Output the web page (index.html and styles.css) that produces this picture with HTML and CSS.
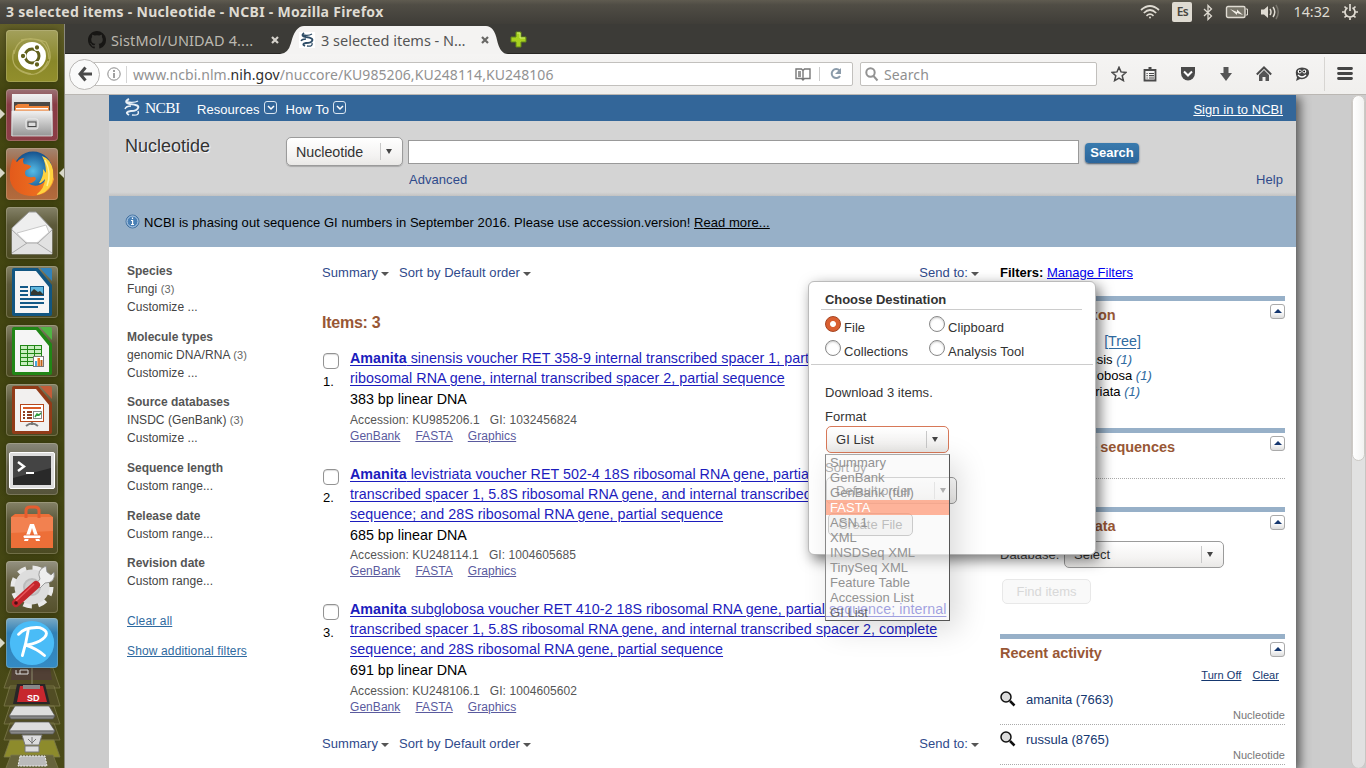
FILE: index.html
```html
<!DOCTYPE html>
<html lang="en">
<head>
<meta charset="utf-8">
<title>3 selected items - Nucleotide - NCBI</title>
<link rel="stylesheet" href="styles.css">
</head>
<body>
<div class="desktop">
  <header class="panel">
    <span class="panel-title">3 selected items - Nucleotide - NCBI - Mozilla Firefox</span>
    <div class="tray">
      <svg width="20" height="16" viewBox="0 0 20 16" fill="none" stroke="#dfdbd2" stroke-width="1.7"><path d="M1 6Q10-2 19 6M3.8 9Q10 3 16.2 9M6.5 11.8Q10 8.600 13.500 11.800"/><circle cx="10" cy="13.600" r="1" fill="#dfdbd2" stroke="none"/></svg>
      <span class="lang">Es</span>
      <svg class="bt" width="10" height="17" viewBox="0 0 10 17" fill="none" stroke="#dfdbd2" stroke-width="1.3"><path d="M1 5l7.500 7L5 15.500V1.500L8.500 5 1 12"/></svg>
      <svg class="battery" width="24" height="14" viewBox="0 0 24 14"><rect x="1.500" y="1.500" width="18.500" height="11" rx="1.500" fill="#777469" stroke="#dfdbd2" stroke-width="1.400"/><path d="M21 4h1.500v6H21" fill="none" stroke="#dfdbd2"/><path d="M5 4l7 3V4.500l6 5.500-6-2v2z" fill="#f0ede5"/></svg>
      <svg class="volume" width="20" height="18" viewBox="0 0 20 18" fill="none" stroke="#dfdbd2" stroke-width="1.500"><path d="M1 6.500h3L8 3v12l-4-3.500H1z" fill="#dfdbd2" stroke="none"/><path d="M10 6q2 3 0 6M13 4q3.500 5 0 10"/><path d="M16 2q4.500 7 0 14" stroke="#77746c"/></svg>
      <span class="clock">14:32</span>
      <svg width="16" height="16" viewBox="0 0 16 16" fill="none" stroke="#dfdbd2" stroke-width="2"><path d="M5.500 3.700a5 5 0 1 0 5 0M8 0v7M2.500 2.500l2 2M13.500 2.500l-2 2M0 8h3M16 8h-3M2.500 13.500l2-2M13.500 13.500l-2-2M8 16v-3" stroke-width="1.700"/></svg>
    </div>
  </header>

  <div class="workspace">
    <nav class="launcher">
      <div class="tile dash"><svg viewBox="0 0 52 52"><g fill="none" stroke="#bdb76a" stroke-width="1.300" opacity=".8"><path d="M8 24Q12 2 40 12M15 10Q42 4 43 29M40 12Q52 34 30 44M42 31Q32 52 13 40M25 44Q2 40 8 20"/></g><circle cx="26" cy="26" r="14" fill="#fff"/><circle cx="26" cy="26" r="7" fill="none" stroke="#61601c" stroke-width="3"/><g fill="#61601c" stroke="#fff" stroke-width="1.300"><circle cx="17" cy="26" r="2.800"/><circle cx="31" cy="17.500" r="2.800"/><circle cx="31" cy="34.500" r="2.800"/></g></svg></div>
      <div class="tile files"><i class="run-left"></i><svg viewBox="0 0 52 52"><defs><linearGradient id="steel" x2="0" y2="1"><stop stop-color="#f1f1f1"/><stop offset="1" stop-color="#969696"/></linearGradient></defs><path d="M6 5h40l1 42H5z" fill="url(#steel)"/><path d="M8 13h36v9H8z" fill="#4b4845"/><path d="M9 17l3-2h11v2h20v5H9z" fill="#ed8237"/><path d="M10 19h32v1.500H10z" fill="#fff"/><path d="M6 22h40v25H6z" fill="url(#steel)" stroke="#eee" stroke-width=".7"/><rect x="20" y="30" width="12" height="10" rx="2" fill="#c5c5c5" stroke="#eee" stroke-width="1"/><rect x="22" y="33" width="8" height="4.500" fill="#ddd" stroke="#484848"/></svg></div>
      <div class="tile firefox"><i class="run-left"></i><i class="run-right"></i><svg viewBox="0 0 52 52"><defs><radialGradient id="globe"><stop stop-color="#55bce7"/><stop offset="1" stop-color="#15518d"/></radialGradient><linearGradient id="flame"><stop stop-color="#e35a1b"/><stop offset=".65" stop-color="#ec6d20"/><stop offset="1" stop-color="#f9a52f"/></linearGradient></defs><circle cx="27" cy="23" r="19.500" fill="url(#globe)"/><path d="M7 10q1 2 4 4 3-4 7-4-2 3 0 6 3 0 7 2-1 3-5 4-2 3 0 6 4 2 7 1 2-1 3 2-3 5-8 4 8 6 16-1 5-5 6-11l4 8q-4 16-21 17Q8 48 4 32q-1-12 3-22" fill="url(#flame)"/><path d="M36 8q9 3 11 14 2 14-8 22-5 3-9 3 9-7 9-16-4 5-6 4 5-7 4-14l3 4q0-10-4-17" fill="#ffd23e"/><path d="M39 12q7 13 2 26" fill="none" stroke="#fff19a" stroke-width="1.500"/></svg></div>
      <div class="tile mail"><svg viewBox="0 0 52 52"><path d="M6 21L23 5h7l16 17v25H6z" fill="#eee" stroke="#999"/><path d="M11 26l29-8 4 10-12 10H20z" fill="#fff" stroke="#c8c8c8"/><path d="M6 22l15 13h10l15-13v25H6z" fill="#e2e2e2"/><path d="M6 23l14 13h12l14-13M6 46l15-10M46 46L31 36" fill="none" stroke="#aaa"/></svg></div>
      <div class="tile office"><svg viewBox="0 0 52 52"><path d="M8 2h24l14 17v29q0 2-2 2H8q-2 0-2-2V4q0-2 2-2" fill="#125681"/><path d="M34 2h10q2 0 2 2v11z" fill="#3282b9"/><path d="M9 5h21l13 16v26H9z" fill="#f5f5f5"/><path d="M14 21h8M14 25h8M14 29h8M14 33h24M14 37h24M14 41h18" stroke="#135987" stroke-width="2"/><rect x="24.500" y="20.500" width="13" height="9" fill="#62b9df" stroke="#135987"/><path d="M25 29v-3l3-3 4 3 2-1 4 4z" fill="#343830"/></svg></div>
      <div class="tile office"><svg viewBox="0 0 52 52"><path d="M8 2h24l14 17v29q0 2-2 2H8q-2 0-2-2V4q0-2 2-2" fill="#218616"/><path d="M34 2h10q2 0 2 2v11z" fill="#50b444"/><path d="M9 5h21l13 16v26H9z" fill="#f5f5f5"/><rect x="14.500" y="20.500" width="21" height="20" fill="#c8edbf" stroke="#218616"/><path d="M14 24.500h22M14 28.500h22M14 32.500h22M14 36.500h22M21.500 20v20M28.500 20v20" stroke="#218616"/><rect x="27.500" y="31.500" width="10" height="10" fill="#fff" stroke="#777"/><path d="M29 36h2v5h-2z" fill="#45a7df"/><path d="M31.500 33h2.500v8h-2.500z" fill="#e77925"/><path d="M34.500 35h2v6h-2z" fill="#bd5f18"/></svg></div>
      <div class="tile office"><svg viewBox="0 0 52 52"><path d="M8 2h24l14 17v29q0 2-2 2H8q-2 0-2-2V4q0-2 2-2" fill="#913b18"/><path d="M34 2h10q2 0 2 2v11z" fill="#c35c38"/><path d="M9 5h21l13 16v26H9z" fill="#f2f0ef"/><rect x="14.500" y="20.500" width="23" height="17" fill="#fff" stroke="#b7471b"/><path d="M17 24h18" stroke="#d95b28" stroke-width="2"/><path d="M17 28h2M21 28h5M17 31h2M21 31h5M17 34h2M21 34h5" stroke="#8f3e20" stroke-width="2"/><rect x="27.500" y="27.500" width="8" height="7" fill="#fff" stroke="#888"/><path d="M29 33l2-3 2 1 2-2" fill="none" stroke="#2d9b3e" stroke-width="1.500"/><path d="M26 38v3M20 42q6-5 12 0" fill="none" stroke="#777" stroke-width="2"/></svg></div>
      <div class="tile term"><svg viewBox="0 0 52 52"><rect x="3.500" y="9.500" width="45" height="36" rx="1.500" fill="#ddd" stroke="#fff"/><rect x="7" y="13" width="38" height="29" fill="#292929"/><path d="M7 13h38v12L7 35z" fill="#444"/><path d="M12 19l6 4.500-6 4.500" fill="none" stroke="#fff" stroke-width="2.400"/><path d="M20 30h8" stroke="#fff" stroke-width="2"/></svg></div>
      <div class="tile shop"><svg viewBox="0 0 52 52"><path d="M5 15l4-3h34l4 3v31H5z" fill="#ed6f38"/><path d="M5 15h42v14L5 31z" fill="#f28150"/><path d="M20 16V9q0-4 4-4h5q4 0 4 4v7" fill="none" stroke="#e55c2f" stroke-width="3"/><path d="M24 22h4l6 17h-4l-4-13-4 13h-4z" fill="#fff"/><rect x="17" y="33" width="18" height="3.500" rx="1.700" fill="#fff" stroke="#e95d2c" stroke-width=".8"/></svg></div>
      <div class="tile settings"><svg viewBox="0 0 52 52"><circle cx="26" cy="26" r="18" fill="none" stroke="#e9e9e9" stroke-width="7" stroke-dasharray="8 6.130"/><circle cx="26" cy="26" r="13" fill="#e7e7e7" stroke="#ddd" stroke-width="9"/><circle cx="26" cy="26" r="8" fill="#ccc" stroke="#bbb" stroke-width="2"/><path d="M30 23l4-5q-4-9 6-13l1 6 4 3 3-3q2 11-9 11l-5 5z" fill="#eee" stroke="#888" stroke-width=".8"/><path d="M10 42L30 24" stroke="#c4262c" stroke-width="8" stroke-linecap="round"/><path d="M10 40L28 23" stroke="#e8555a" stroke-width="1.500"/><circle cx="10" cy="42" r="1.800" fill="#491015"/></svg></div>
      <div class="tile r-app"><i class="run-left"></i><svg viewBox="0 0 52 52"><circle cx="26" cy="26" r="23" fill="#4abcf7"/><path d="M12 17Q19 9 34 10q14 5 0 14-8 4-15 4 12 4 20 11M22 13q-2 13-6 26" fill="none" stroke="#fff" stroke-width="3" stroke-linecap="round"/></svg></div>
      <svg class="folded" width="64" height="100" viewBox="0 0 64 100"><g fill="#514d24" stroke="#7b794a" stroke-width=".8"><path d="M11 0h42l7 20H4zM10 18h44l6 20H4zM10 38h44l6 18H4zM10 55h44l6 17H4z"/><path d="M10 72h44l6 17H4z" fill="#8d8b2c"/><path d="M11 87h42l7 18H4z" fill="#67643c"/></g><path d="M12 0h38l2 12H11z" fill="#514035"/><path d="M20 2h8v4h-8zM16 2v4h4" stroke="#ddd" fill="none"/><path d="M32 0v17" stroke="#8c8a6c"/><path d="M17 16h28l5 20H13z" fill="#282627"/><path d="M20 18h23l4 16H17z" fill="#c7272e"/><path d="M23 17h17v4H23z" fill="#888"/><text x="27" y="33" class="sd">SD</text><g stroke="#555" stroke-width=".7"><path d="M15 38h34l6 10H9zM15 54h34l6 9H9z" fill="#ddd"/><path d="M9 48h46l-2 3H11zM9 63h46l-2 3H11z" fill="#888"/></g><path d="M22 67h20l-3 10H25zM25 78h14v6H25z" fill="#ddd" stroke="#777"/><path d="M32 69v7M28 71l4 4 4-4" fill="none" stroke="#777"/><path d="M20 88h25l2 10H18z" fill="#bbb" stroke="#eee" stroke-dasharray="2 1"/></svg>
    </nav>

    <main class="browser">
      <div class="tabs">
        <div class="tab quiet">
          <svg class="favicon" width="18" height="18" viewBox="0 0 16 16"><path fill="#171614" d="M8 0C3.580 0 0 3.580 0 8c0 3.540 2.290 6.530 5.470 7.590.4.070.55-.17.55-.38v-1.490c-2 .37-2.690-.5-2.690-.94C3 12 2 11 1.500 10.800c1-.2 1.600.6 2 1.200.7 1 1.900.8 2.500.5.1-.5.300-.9.600-1.100-2-.2-3.700-1-3.700-3.900 0-.9.300-1.600.8-2.100-.1-.2-.3-1 .1-2.100 0 0 .7-.2 2.200.8a7.500 7.500 0 0 1 4 0c1.500-1 2.200-.8 2.200-.8.400 1.100.2 1.900.1 2.100.5.600.8 1.300.8 2.100 0 3-1.800 3.700-3.700 3.900.3.300.6.700.6 1.500v2.300c0 .2.150.460.550.380A8 8 0 0 0 8 0"/></svg>
          <span>SistMol/UNIDAD 4....</span><svg class="close" width="8" height="8"><path d="M1 1l6 6M7 1L1 7" stroke="#d5d2cb" stroke-width="2.200"/></svg>
        </div>
        <div class="tab current">
          <svg class="shape" width="228" height="28" viewBox="0 0 228 28"><path d="M0 28Q8 28 11 17 15 0 24 0H206Q214 0 217 14 220 28 228 28z" fill="#f4f3f2"/></svg>
          <svg class="favicon" width="16" height="16" viewBox="0 0 16 16" fill="none" stroke="#2d4c66"><path d="M0 0h16v16H0z" fill="#fff" stroke="none"/><path d="M5 1Q1 4 7 5q8 1 6 4-1 2-6 2-5 1-1 3" stroke-width="1.800"/><path d="M4 3q6 1 9-1M2 9q1-2 5-2M8 14q6 1 5-3" stroke-width="1.300"/></svg>
          <span>3 selected items - N…</span><svg class="close" width="8" height="8"><path d="M1 1l6 6M7 1L1 7" stroke="#696866" stroke-width="2.200"/></svg>
        </div>
        <svg class="newtab" width="17" height="17" viewBox="0 0 17 17"><path d="M6 1h5v5h5v5h-5v5H6v-5H1V6h5z" fill="#a8d11f" stroke="#62861a"/><path d="M7 2h3v5h5" stroke="#d2ef70" fill="none"/></svg>
      </div>
      <div class="toolbar">
        <div class="back"><svg width="16" height="16" viewBox="0 0 16 16" fill="none" stroke="#4a4a4a" stroke-width="3"><path d="M8.500 1.500L3 8l5.500 6.500M3 8h12"/></svg></div>
        <div class="url">
          <svg width="14" height="14" viewBox="0 0 14 14" fill="none" stroke="#8a8a8a"><circle cx="7" cy="7" r="6.200"/><path d="M7 3v2M7 6v5" stroke-width="1.600"/></svg>
          <span class="address">www.ncbi.nlm.<b>nih.gov</b>/nuccore/KU985206,KU248114,KU248106</span>
          <svg class="reader" width="16" height="14" viewBox="0 0 16 14" fill="none" stroke="#777" stroke-width="1.400"><path d="M1 2h5.500L8 3.500 9.500 2H15v9.500H9.500L8 13l-1.500-1.500H1zM8 3.500V12M3 5h3M3 7h3M3 9h3"/></svg>
          <svg class="reload" width="14" height="14" viewBox="0 0 14 14"><path d="M10.500 3.500A4.500 4.500 0 1 0 11 9" fill="none" stroke="#8b9baa" stroke-width="2"/><path d="M12 1v6H6z" fill="#8b9baa"/></svg>
        </div>
        <div class="find"><svg width="14" height="15" viewBox="0 0 14 15" fill="none" stroke="#929292" stroke-width="2"><circle cx="5.500" cy="5.500" r="4.200"/><path d="M8.500 9l4 4.500"/></svg><span>Search</span></div>
        <div class="actions">
          <svg viewBox="0 0 16 16"><path d="M8 1.300l2 4.600 5 .5-3.800 3.300 1.200 4.900L8 12l-4.400 2.600 1.200-4.900L1 6.400l5-.5z" fill="none" stroke="#4a4a4a" stroke-width="1.500"/></svg>
          <svg viewBox="0 0 16 16"><path d="M2.500 4h11v10.500h-11z" fill="#f4f3f2" stroke="#4a4a4a" stroke-width="1.800"/><path d="M5 5V3h1.500V1h3v2H11v2z" fill="#4a4a4a"/><path d="M4.500 7.500h1.200M7 7.500h5M4.500 9.700h1.200M7 9.700h5M4.500 12h1.200M7 12h5" stroke="#4a4a4a" stroke-width="1.200"/></svg>
          <svg viewBox="0 0 16 16"><path d="M1 1h14v6a7 7.500 0 0 1-14 0z" fill="#4a4a4a"/><path d="M4 5.500l4 4 4-4" fill="none" stroke="#fff" stroke-width="2"/></svg>
          <svg viewBox="0 0 16 16"><path d="M5.500 1h5v6H14l-6 8-6-8h3.500z" fill="#555"/></svg>
          <svg viewBox="0 0 16 16"><path d="M.8 8.500L8 1.500l7.200 7" fill="none" stroke="#4a4a4a" stroke-width="2"/><path d="M3 9l5-5 5 5v6H9.500v-4h-3v4H3z" fill="#555"/></svg>
          <svg viewBox="0 0 16 16"><path d="M2 15l1-3.500Q-1 2 8 1.500 16 2 15 8q-2 6-9 5z" fill="#454545"/><circle cx="5.700" cy="5.500" r="1.900" fill="#fff"/><circle cx="10.300" cy="5.500" r="1.900" fill="#fff"/><circle cx="5.900" cy="5.500" r=".9"/><circle cx="10.100" cy="5.500" r=".9"/><path d="M4 9q4 4 8 0" fill="none" stroke="#fff" stroke-width="1.300"/></svg>
          <svg class="menu" viewBox="0 0 16 16"><path d="M1.500 2.500h13M1.500 7.500h13M1.500 12.500h13" stroke="#454545" stroke-width="2.800" stroke-linecap="round"/></svg>
        </div>
      </div>

      <div class="viewport">
        <div class="page">
          <div class="ncbi-bar">
            <svg width="17" height="20" viewBox="0 0 17 20" fill="none" stroke="#e9f0f7"><path d="M5 1Q-1 4 6 6q10 1 8 4-1 3-7 3-7 1-2 4" stroke-width="2"/><path d="M3 4q8 1 11-1M1 11q1-3 6-3M8 17q8 1 6-4" stroke-width="1.400"/></svg>
            <span class="ncbi-name">NCBI</span>
            <a class="resources">Resources</a><i class="caret-box"><svg width="8" height="6"><path d="M1 1l3 3 3-3" fill="none" stroke="#fff" stroke-width="1.500"/></svg></i>
            <a class="howto">How To</a><i class="caret-box"><svg width="8" height="6"><path d="M1 1l3 3 3-3" fill="none" stroke="#fff" stroke-width="1.500"/></svg></i>
            <a class="signin">Sign in to NCBI</a>
          </div>
          <div class="search-band">
            <h1>Nucleotide</h1>
            <div class="select db"><span>Nucleotide</span><i></i></div>
            <div class="query"><div class="query-box"></div><a>Advanced</a></div>
            <div class="go"><button>Search</button><a>Help</a></div>
          </div>
          <div class="notice">
            <svg width="15" height="15" viewBox="0 0 15 15"><circle cx="7.500" cy="7.500" r="6.500" fill="#4a80b5" stroke="#41709f"/><circle cx="7.500" cy="7.500" r="5.500" fill="none" stroke="#bad0e8"/><path d="M7.500 3.500v1.500M6 6.500h1.600v4M6 10.500h3" stroke="#fff" stroke-width="1.200" fill="none"/></svg>
            <span>NCBI is phasing out sequence GI numbers in September 2016. Please use accession.version! <u>Read more...</u></span>
          </div>

          <div class="columns">
            <aside class="facets">
              <div><b>Species</b><p>Fungi <small>(3)</small></p><p>Customize ...</p></div>
              <div><b>Molecule types</b><p>genomic DNA/RNA <small>(3)</small></p><p>Customize ...</p></div>
              <div><b>Source databases</b><p>INSDC (GenBank) <small>(3)</small></p><p>Customize ...</p></div>
              <div><b>Sequence length</b><p>Custom range...</p></div>
              <div><b>Release date</b><p>Custom range...</p></div>
              <div><b>Revision date</b><p>Custom range...</p></div>
              <a class="clear">Clear all</a>
              <a>Show additional filters</a>
            </aside>

            <section class="results">
              <div class="display"><a>Summary<i></i></a><a>Sort by Default order<i></i></a><a class="send">Send to:<i></i></a></div>
              <h2>Items: 3</h2>
              <article><div class="pick"><i></i><span>1.</span></div><div class="entry">
                <h3><b>Amanita</b> sinensis voucher RET 358-9 internal transcribed spacer 1, partial sequence; 5.8S<br>ribosomal RNA gene, internal transcribed spacer 2, partial sequence</h3>
                <p class="length">383 bp linear DNA</p><p class="ids"><span>Accession: KU985206.1</span><span>GI: 1032456824</span></p><p class="links"><a>GenBank</a><a>FASTA</a><a>Graphics</a></p></div></article>
              <article><div class="pick"><i></i><span>2.</span></div><div class="entry">
                <h3><b>Amanita</b> levistriata voucher RET 502-4 18S ribosomal RNA gene, partial sequence; internal<br>transcribed spacer 1, 5.8S ribosomal RNA gene, and internal transcribed spacer 2, complete<br>sequence; and 28S ribosomal RNA gene, partial sequence</h3>
                <p class="length">685 bp linear DNA</p><p class="ids"><span>Accession: KU248114.1</span><span>GI: 1004605685</span></p><p class="links"><a>GenBank</a><a>FASTA</a><a>Graphics</a></p></div></article>
              <article><div class="pick"><i></i><span>3.</span></div><div class="entry">
                <h3><b>Amanita</b> subglobosa voucher RET 410-2 18S ribosomal RNA gene, partial sequence; internal<br>transcribed spacer 1, 5.8S ribosomal RNA gene, and internal transcribed spacer 2, complete<br>sequence; and 28S ribosomal RNA gene, partial sequence</h3>
                <p class="length">691 bp linear DNA</p><p class="ids"><span>Accession: KU248106.1</span><span>GI: 1004605602</span></p><p class="links"><a>GenBank</a><a>FASTA</a><a>Graphics</a></p></div></article>
              <div class="display bottom"><a>Summary<i></i></a><a>Sort by Default order<i></i></a><a class="send">Send to:<i></i></a></div>
            </section>

            <aside class="portlets">
              <p class="filters"><b>Filters:</b> <u>Manage Filters</u></p>
              <section class="taxa"><header><h4>Results by taxon</h4><i class="fold"></i></header>
                <p class="tree">Top Organisms <a>[Tree]</a></p>
                <p>Amanita sinensis <em>(1)</em></p><p>Amanita subglobosa <em>(1)</em></p><p>Amanita levistriata <em>(1)</em></p></section>
              <section class="analyze"><header><h4>Analyze these sequences</h4><i class="fold"></i></header><hr></section>
              <section class="related"><header><h4>Find related data</h4><i class="fold"></i></header>
                <div class="database"><span>Database:</span><div class="select"><span>Select</span><i></i></div></div>
                <div class="find-items">Find items</div></section>
              <section class="recent"><header><h4>Recent activity</h4><i class="fold"></i></header>
                <p class="switches"><a>Turn Off</a><a>Clear</a></p>
                <div class="activity"><svg width="16" height="16" viewBox="0 0 16 16"><circle cx="6" cy="6" r="5" fill="#ddd" stroke="#111" stroke-width="1.500"/><path d="M10 10l4.500 4.500" stroke="#111" stroke-width="2.500"/></svg><span>amanita (7663)</span><small>Nucleotide</small></div>
                <div class="activity"><svg width="16" height="16" viewBox="0 0 16 16"><circle cx="6" cy="6" r="5" fill="#ddd" stroke="#111" stroke-width="1.500"/><path d="M10 10l4.500 4.500" stroke="#111" stroke-width="2.500"/></svg><span>russula (8765)</span><small>Nucleotide</small></div>
              </section>
            </aside>
          </div>

          <div class="send-to">
            <h5>Choose Destination</h5>
            <div class="choices"><label><i class="on"></i>File</label><label><i></i>Clipboard</label><label><i></i>Collections</label><label><i></i>Analysis Tool</label></div>
            <div class="download">
              <p>Download 3 items.</p><p class="format">Format</p>
              <div class="select gi"><span>GI List</span><i></i></div>
              <p class="sort">Sort by</p>
              <div class="select order"><span>Default order</span><i></i></div>
              <div class="create">Create File</div>
            </div>
            <ul class="formats"><li>Summary</li><li>GenBank</li><li>GenBank (full)</li><li class="hot">FASTA</li><li>ASN.1</li><li>XML</li><li>INSDSeq XML</li><li>TinySeq XML</li><li>Feature Table</li><li>Accession List</li><li class="dark">GI List</li></ul>
          </div>
        </div>
        <div class="scrollbar"><i></i></div>
      </div>
    </main>
  </div>
</div>
</body>
</html>
```
FILE: styles.css
```css
* { box-sizing: border-box; }
body { margin: 0; font: 13px "Liberation Sans", Arial, sans-serif; color: #000; overflow: hidden; }
h1, h2, h3, h4, h5, p, ul { margin: 0; padding: 0; font-weight: normal; }
i { font-style: normal; }
svg { display: block; flex: none; }
.desktop { width: 1366px; height: 768px; overflow: hidden; display: flex; flex-direction: column; }

/* Top panel */
.panel { height: 24px; flex: none; display: flex; justify-content: space-between; background: linear-gradient(#5f5b50, #504d45 20%, #3f3d38); color: #dfdbd2; font-family: "Noto Sans", sans-serif; padding: 0 8px 0 6px; }
.panel-title { font-weight: bold; font-size: 14px; line-height: 24px; letter-spacing: .3px; white-space: nowrap; }
.tray { display: flex; align-items: center; }
.lang { background: #dfdbd2; color: #484640; width: 20px; height: 20px; line-height: 20px; font-size: 12px; font-weight: 600; text-align: center; border-radius: 2px; margin: 0 11px 0 12px; letter-spacing: -.5px; }
.battery { margin-left: 12px; }
.volume { margin-left: 11px; }
.clock { font-size: 14.3px; margin: 0 12px 0 13px; line-height: 24px; }

.workspace { display: flex; flex: 1; min-height: 0; }
.launcher { width: 65px; flex: none; padding: 6px 0 0 6px; display: flex; flex-direction: column; gap: 7px; background: linear-gradient(#625f28, #444611 9%, #424511 60%, #4a4a18); border-right: 1px solid #8b897e; }
.tile { width: 52px; height: 52px; flex: none; border-radius: 4px; position: relative; background: linear-gradient(#858268, #5c593a 35%, #4b4a21); box-shadow: inset 0 0 0 1px rgba(211, 208, 174, .28), 0 0 5px rgba(25, 25, 0, .45); }
.tile > svg { width: 52px; height: 52px; }
.dash { background: linear-gradient(#a3a05c, #898729 60%, #928f2c); }
.files { background: linear-gradient(#9b7376, #893b44 30%, #8c3d47); }
.firefox { background: linear-gradient(#a38672, #a45e35 40%, #b36b3d); }
.term { background: linear-gradient(#89887a, #626049 45%, #55533a); }
.settings { background: linear-gradient(#959282, #696446 40%, #54502b); }
.r-app { background: linear-gradient(#7aaac6, #3080b6 30%, #348bc5); height: 50px; margin-top: -2px; }
.r-app > svg { height: 50px; }
.run-left, .run-right { position: absolute; top: 20px; border: 5px solid transparent; }
.run-left { left: -6px; border-left: 5px solid #d8d8c8; border-right: 0; }
.run-right { right: -6px; border-right: 5px solid #d8d8c8; border-left: 0; }
.folded { margin: -7px 0 0 -6px; }
.sd { font: bold 9px "Liberation Sans", sans-serif; fill: #fff; }

/* Browser chrome */
.browser { flex: 1; min-width: 0; display: flex; flex-direction: column; font-family: "Liberation Sans", Arial, sans-serif; }
.tabs { height: 30px; flex: none; background: #3c3b37; border-bottom: 1px solid #272623; display: flex; padding-top: 2px; }
.tab { position: relative; display: flex; align-items: center; height: 28px; font: 14.5px "Noto Sans", sans-serif; white-space: nowrap; flex: none; }
.tab > span, .tab .favicon, .tab .close { position: relative; }
.quiet { width: 222px; padding-left: 23px; color: #bbb8b0; }
.quiet span { margin-left: 5px; width: 142px; letter-spacing: .15px; }
.close { margin-left: 18px; }
.current { width: 216px; padding-left: 12px; color: #555; }
.current span { margin-left: 6px; width: 146px; letter-spacing: 0; }
.current .close { margin-left: 14px; }
.shape { position: absolute; left: -7px; top: 0; height: 28px; }
.newtab { margin: 5px 0 0 7px; }
.toolbar { height: 41px; flex: none; background: linear-gradient(#f5f4f3, #f0efed); border-bottom: 1px solid #bab7b3; display: flex; align-items: center; padding-left: 4px; font: 14px "Noto Sans", sans-serif; }
.back { width: 31px; height: 31px; border: 1px solid #b9b7b5; border-radius: 50%; background: #fafafa; display: flex; align-items: center; justify-content: center; position: relative; z-index: 1; flex: none; }
.url { height: 24px; width: 761px; margin-left: -8px; flex: none; border: 1px solid #c2c0bd; background: #fff; border-radius: 0 2px 2px 0; display: flex; align-items: center; padding-left: 14px; }
.address { margin-left: 5px; padding-left: 6px; border-left: 1px solid #d5d5d5; line-height: 17px; color: #929292; letter-spacing: .07px; flex: 1; white-space: nowrap; }
.address b { font-weight: normal; color: #2d2d2d; }
.reader { margin-right: 8px; }
.url .reload { box-sizing: content-box; border-left: 1px solid #ccc; padding-left: 9px; margin-right: 9px; }
.find { height: 24px; width: 237px; border: 1px solid #c2c0bd; border-radius: 2px; background: #fff; color: #8f8f8f; display: flex; align-items: center; padding-left: 4px; margin-left: 7px; gap: 5px; flex: none; letter-spacing: .1px; }
.actions { display: flex; align-items: center; margin-left: 14px; gap: 22px; }
.actions svg { width: 16px; height: 16px; }
.actions svg:first-child { margin-right: -7px; }
.actions .menu { box-sizing: content-box; border-left: 1px solid #d7d5d2; padding: 9px 0 9px 12px; margin-left: -8px; }

/* Web page */
.viewport { flex: 1; min-height: 0; background: #ccc; display: flex; justify-content: space-between; padding-left: 44px; overflow: hidden; }
.page { width: 1187px; height: 673px; background: #fff; position: relative; box-shadow: 3px 3px 10px 1px #555; clip-path: inset(0 -16px 0 0); }
.scrollbar { width: 15px; background: #e1e1e1; border: 1px solid #c8c5c2; border-width: 0 1px; border-radius: 8px; }
.scrollbar i { display: block; height: 366px; background: linear-gradient(90deg, #fff, #f2f2f1); border: 1px solid #ccc9c5; border-radius: 8px; }
.ncbi-bar { height: 26px; background: #369; color: #fff; display: flex; align-items: flex-start; padding: 3px 13px 0 15px; }
.ncbi-name { font: 15.5px/19px "Liberation Serif", serif; letter-spacing: -.6px; margin-left: 4px; width: 52px; }
.resources, .howto, .signin { line-height: 23px; letter-spacing: .05px; }
.howto { margin-left: 9px; }
.signin { margin-left: auto; text-decoration: underline; }
.caret-box { width: 13px; height: 13px; border: 1px solid #d9e5f0; border-radius: 3px; margin: 3px 0 0 4px; padding: 3px 0 0 2px; }
.search-band { height: 75px; background: linear-gradient(#d4d4d4 95%, #c2c2c2); display: flex; padding: 16px 13px 0 16px; }
.search-band h1 { width: 161px; font-size: 18px; line-height: 19px; color: #333; text-shadow: 1px 1px 1px #fff; }
.select { display: flex; align-items: center; border: 1px solid #9b9b9b; border-radius: 5px; background: linear-gradient(#fff, #f4f3f2 65%, #e9e8e6); color: #333; position: relative; }
.select span { flex: 1; padding-left: 9px; white-space: nowrap; }
.select i { width: 17px; height: 17px; border-left: 1px solid #c8c8c8; display: flex; align-items: center; justify-content: center; margin-right: 5px; }
.select i::after { content: ""; border: 3px solid transparent; border-top: 5px solid #444; border-bottom: 0; }
.db { width: 117px; height: 29px; font-size: 14.3px; box-shadow: 0 1px 1px #aaa; letter-spacing: -.05px; }
.query { margin-left: 5px; width: 671px; padding-top: 3px; }
.query-box { height: 24px; border: 1px solid #999; background: #fff; }
.query a, .go a { color: #2f4a8b; line-height: 15px; letter-spacing: .05px; }
.query a { display: block; margin: 8px 0 0 1px; }
.go { margin-left: 6px; flex: 1; padding-top: 6px; }
.go button { display: block; width: 54px; height: 20px; padding: 0; border: 0; border-radius: 4px; background: linear-gradient(#3a7bae, #2b659b); color: #fff; font: bold 13px/18px "Liberation Sans", sans-serif; box-shadow: 0 1px 2px #456; }
.go a { display: block; text-align: right; margin-top: 9px; }
.notice { height: 51px; background: #97b0c8; display: flex; padding: 18px 0 0 16px; }
.notice span { margin-left: 4px; line-height: 17px; letter-spacing: .05px; }

.columns { display: flex; padding: 15px 0 0 18px; height: 521px; overflow: hidden; }
.facets { width: 195px; font-size: 12px; line-height: 18px; color: #444; flex: none; }
.facets div { margin-bottom: 11.7px; }
.facets b { color: #555; display: block; }
.facets p { letter-spacing: .05px; }
.facets small { font-size: 11px; color: #666; letter-spacing: .1px; }
.facets a { display: block; color: #2f6aa0; text-decoration: underline; margin-bottom: 12px; letter-spacing: .14px; }
.facets .clear { margin-top: 22px; }
.results { width: 678px; flex: none; }
.display { display: flex; color: #2f4a8b; padding-top: 2px; line-height: 18px; letter-spacing: .05px; }
.display a { margin-right: 10px; white-space: nowrap; }
.display .send { margin: 0 21px 0 auto; }
.display i { display: inline-block; border: 4px solid transparent; border-top-color: #555; border-bottom: 0; margin: 0 0 1px 3px; }
.results h2 { font-size: 16px; font-weight: bold; color: #985735; line-height: 20px; margin: 31px 0 15px; letter-spacing: -.25px; }
article { display: flex; margin-bottom: 21px; }
.pick { width: 28px; font-size: 13px; line-height: 15px; padding: 5px 0 0 1px; }
.pick i { display: block; width: 16px; height: 16px; border: 1px solid #939393; border-radius: 4px; background: #fff; margin-bottom: 5px; box-shadow: inset 0 1px 1px #ddd; }
.entry h3 { font-size: 14.3px; line-height: 20px; color: #1c1cbd; text-decoration: underline; text-underline-offset: 2px; white-space: nowrap; letter-spacing: .035px; }
.length { font-size: 14.3px; line-height: 22.5px; }
.ids { font-size: 12px; line-height: 18px; color: #555; display: flex; gap: 10px; letter-spacing: .08px; }
.links { font-size: 12px; line-height: 14px; color: #5a5a9e; display: flex; gap: 15px; letter-spacing: .05px; }
.links a { text-decoration: underline; }
.bottom { padding-top: 0; }

.portlets { width: 285px; flex: none; }
.filters { padding-top: 2px; line-height: 18px; height: 34px; }
.filters u { color: #00e; }
.portlets section { border-top: 5px solid #97b0c8; }
.portlets header { display: flex; justify-content: space-between; padding-top: 3px; }
.portlets h4 { font-weight: bold; font-size: 14.5px; line-height: 22px; color: #985735; letter-spacing: -.03px; white-space: nowrap; }
.fold { width: 15px; height: 15px; border: 1px solid #aaa; border-radius: 3px; background: linear-gradient(#fff 50%, #ddd); padding: 4px 0 0 3px; }
.fold::after { content: ""; display: block; width: 0; border: 4px solid transparent; border-top: 0; border-bottom-color: #15376f; margin-left: -.5px; }
.taxa { height: 132px; }
.taxa p { line-height: 16px; padding-left: 14px; letter-spacing: .02px; }
.taxa .tree { font-size: 14.3px; line-height: 24px; padding: 3px 0 0; height: 26px; letter-spacing: 0; }
.tree a { text-decoration: underline; text-underline-offset: 2px; margin-left: 4px; }
.taxa a, .taxa em { color: #2f6aa0; }
.analyze { height: 79px; }
.portlets hr { border: 0; border-top: 1px dotted #aaa; margin: 20px 0 0; }
.related { height: 127px; }
.database { display: flex; align-items: center; margin-top: 4px; color: #444; }
.database > span { width: 64px; }
.database .select { width: 160px; height: 27px; }
.find-items { width: 89px; height: 25px; margin: 11px 0 0 2px; border: 1px solid #e8e8e8; border-radius: 5px; background: #f9f9f9; color: #d8d8d8; text-align: center; line-height: 23px; }
.switches { display: flex; justify-content: flex-end; gap: 11px; padding: 3px 6px 0 0; font-size: 11px; line-height: 17px; color: #15376f; height: 21px; letter-spacing: .05px; }
.switches a { text-decoration: underline; }
.activity { display: grid; grid-template-columns: 26px 1fr; height: 40px; border-bottom: 1px dotted #aaa; color: #15376f; padding-top: 6px; align-content: start; }
.activity span { line-height: 18px; }
.activity small { grid-column: 1 / 3; text-align: right; font-size: 11px; line-height: 12px; color: #777; }

/* Send-to popup, layered over the results */
.send-to { position: absolute; left: 699px; top: 186px; width: 288px; height: 274px; border: 1px solid #bbb; border-radius: 6px; background: #fff; box-shadow: 4px 5px 14px rgba(0, 0, 0, .55); color: #333; padding: 8px 2px 0; letter-spacing: .05px; }
.send-to h5 { font-size: 13px; font-weight: bold; line-height: 19px; margin: 0 11px 0 10px; padding-left: 4px; border-bottom: 1px solid #ccc; letter-spacing: -.05px; }
.choices { display: grid; grid-template-columns: 104px 1fr; padding: 4px 0 3px 14px; border-bottom: 1px solid #ccc; height: 55px; }
.choices label { display: flex; height: 24px; gap: 3px; line-height: 28px; }
.choices i { width: 16px; height: 16px; border: 1px solid #888; border-radius: 50%; background: #fff; margin-top: 2px; box-shadow: inset 0 1px 2px #ccc; }
.choices .on { background: radial-gradient(circle, #fff 2.5px, #d95f31 3.5px); border-color: #a5421e; box-shadow: none; }
.download { padding: 18px 0 0 14px; }
.download p { line-height: 20px; }
.download .format { margin-top: 4px; }
.gi { width: 123px; height: 27px; border-color: #d77858; margin: -1px 0 0 1px; }
.download .sort { margin-top: 5px; line-height: 20px; height: 19px; color: #444; }
.order { width: 131px; height: 27px; margin: 0 0 0 1px; }
.create { width: 85px; height: 23px; margin: 9px 0 0 3px; border: 1px solid #888; border-radius: 5px; line-height: 21px; text-align: center; background: #eee; color: #666; }
.formats { position: absolute; left: 16px; top: 172px; width: 125px; height: 167px; list-style: none; background: rgba(247, 247, 247, .6); border: 1px solid #777; border-color: #aaa #555 #555 #888; box-shadow: 8px 8px 28px rgba(0, 0, 0, .15); line-height: 15px; color: #929292; padding-top: 0; }
.formats li { padding-left: 4px; }
.formats .hot { background: rgba(255, 151, 117, .72); color: #fff; }
.formats .dark { color: #666; }
```
